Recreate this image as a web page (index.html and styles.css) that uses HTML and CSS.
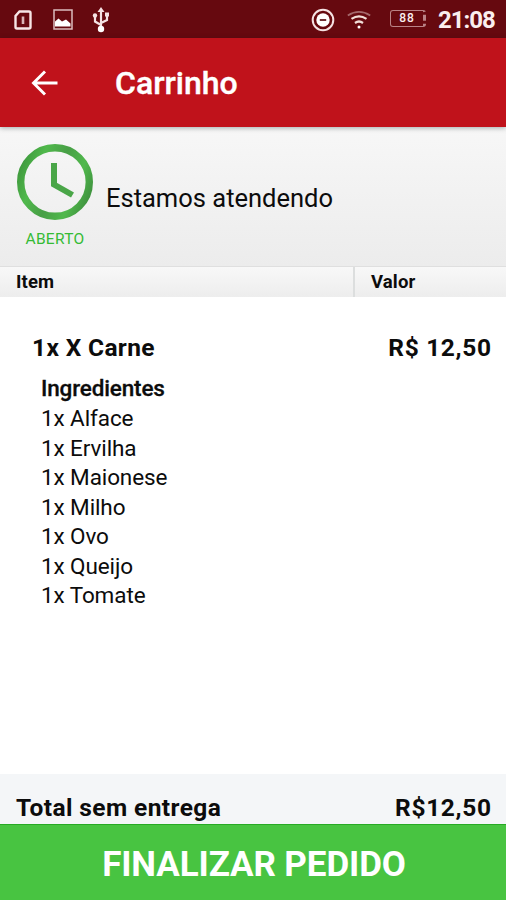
FILE: index.html
```html
<!DOCTYPE html>
<html lang="pt-BR">
<head>
<meta charset="utf-8">
<title>Carrinho</title>
<link rel="stylesheet" href="styles.css">
</head>
<body>
<div class="app">
  <div class="statusbar">
    <svg class="ic-sim" width="18" height="20" viewBox="0 0 18 20"><path d="M5.500 1.500H15a1.500 1.500 0 0 1 1.500 1.500V17a1.500 1.500 0 0 1-1.500 1.500H3A1.500 1.500 0 0 1 1.500 17V6z" fill="none" stroke="#f7e6e6" stroke-width="2.400"/><path d="M9 6.500V14" stroke="#d9b4b6" stroke-width="2.600"/></svg>
    <svg class="ic-image" width="20" height="21" viewBox="0 0 20 21"><rect x="1" y="1" width="18" height="19" fill="none" stroke="#dcbcbe" stroke-width="1.500"/><path d="M2 17.500V12.500L5.500 9.500 9 12.500l4-2 4.500 4v3z" fill="#fff"/></svg>
    <svg class="ic-usb" width="18" height="26" viewBox="0 0 18 26"><path d="M9 4v18M9 18L3 14.500V8.500M9 16l6-3V8" fill="none" stroke="#f5e2e3" stroke-width="2.200"/><path d="M9 0l3.500 5h-7z" fill="#f5e2e3"/><circle cx="9" cy="22" r="3.200" fill="#fff"/><circle cx="3" cy="8.500" r="2.200" fill="#f5e2e3"/><rect x="13" y="5.500" width="4" height="4" fill="#f5e2e3"/></svg>
    <div class="status-right">
      <svg class="ic-dnd" width="24" height="24" viewBox="0 0 24 24"><circle cx="12" cy="12" r="10.300" fill="none" stroke="#f5e2e3" stroke-width="2"/><circle cx="12" cy="12" r="6.700" fill="#fff"/><path d="M8.800 12h6.400" stroke="#713034" stroke-width="2"/></svg>
      <svg class="ic-wifi" width="24" height="20" viewBox="0 0 24 20"><path d="M.8 5.500Q12-1.700 23.200 5.500" fill="none" stroke="#a4686b" stroke-width="1.800"/><path d="M4.500 8.800q7.500-5 15 0M8 13q4-3 8 0" fill="none" stroke="#f2dfd9" stroke-width="2.200"/><circle cx="12" cy="17" r="1.500" fill="#fff"/></svg>
      <div class="battery"><span>88</span></div>
      <div class="clock">21:08</div>
    </div>
  </div>
  <header class="toolbar">
    <svg width="28" height="26" viewBox="0 0 28 26"><path d="M26.500 13H3M14 1.500L2.500 13 14 24.500" fill="none" stroke="#fff" stroke-width="2.900"/></svg>
    <h1>Carrinho</h1>
  </header>
  <section class="store">
    <div class="badge">
      <svg width="78" height="78" viewBox="0 0 78 78">
        <defs><linearGradient id="ring" x1="0" y1="0.300" x2="1" y2="0.700"><stop offset="0" stop-color="#419d3f"/><stop offset=".22" stop-color="#50b94c"/><stop offset=".5" stop-color="#489f46"/><stop offset=".78" stop-color="#50b94c"/><stop offset="1" stop-color="#419640"/></linearGradient></defs>
        <circle cx="39" cy="39" r="34.300" fill="none" stroke="url(#ring)" stroke-width="7.400"/>
        <path d="M38 20v21.500L56.500 52" fill="none" stroke="#4aa648" stroke-width="6"/>
      </svg>
      <span class="open">ABERTO</span>
    </div>
    <p class="message">Estamos atendendo</p>
  </section>
  <div class="columns"><div class="col-item">Item</div><div class="col-value">Valor</div></div>
  <main class="cart">
    <div class="line"><span class="product">1x X Carne</span><span class="price">R$ 12,50</span></div>
    <h2>Ingredientes</h2>
    <ul>
      <li>1x Alface</li>
      <li>1x Ervilha</li>
      <li>1x Maionese</li>
      <li>1x Milho</li>
      <li>1x Ovo</li>
      <li>1x Queijo</li>
      <li>1x Tomate</li>
    </ul>
  </main>
  <div class="total"><span class="total-label">Total sem entrega</span><span class="price">R$12,50</span></div>
  <button class="checkout">FINALIZAR PEDIDO</button>
</div>
</body>
</html>
```
FILE: styles.css
```css
* { box-sizing: border-box; }
body { margin: 0; font-family: Roboto, "Liberation Sans", sans-serif; color: #0c0c0c; background: #fff; }
.app { width: 506px; height: 900px; display: flex; flex-direction: column; overflow: hidden; }
h1, h2, p, ul { margin: 0; padding: 0; }
svg { display: block; flex: none; }
.statusbar { height: 38px; flex: none; display: flex; align-items: center; background: #66090f; padding: 2px 12px 0 14px; color: #fbeeee; }
.ic-image { margin-left: 21px; margin-bottom: 2px; }
.ic-usb { margin-left: 19px; margin-bottom: 1px; }
.status-right { margin-left: auto; display: flex; align-items: center; }
.ic-wifi { margin-left: 12px; margin-bottom: 1px; }
.battery { width: 36px; height: 17px; margin: 0 0 4px 19px; border: 1px solid #b98286; border-right: 3px dashed #b98286; border-radius: 3px; display: flex; align-items: center; justify-content: center; font-size: 12px; font-weight: 500; letter-spacing: 1px; }
.clock { width: 56px; margin-left: 12px; font-size: 24px; line-height: 36px; font-weight: 700; letter-spacing: -1px; white-space: nowrap; }
.toolbar { height: 89px; flex: none; display: flex; align-items: center; background: #c0121b; color: #fff; padding-left: 31px; position: relative; box-shadow: 0 1px 5px rgba(0,30,30,.35); }
.toolbar h1 { margin-left: 56px; font-size: 32px; line-height: 40px; font-weight: 500; -webkit-text-stroke: .4px #fff; }
.store { height: 139px; flex: none; display: flex; background: linear-gradient(#f7f7f7, #ececec); padding-left: 15px; }
.badge { width: 81px; padding: 16px 1px 0 0; display: flex; flex-direction: column; align-items: center; }
.open { margin-top: 8px; font-size: 15.500px; line-height: 20px; letter-spacing: .3px; color: #35bb35; }
.message { margin-left: 10px; padding-top: 54px; font-size: 25.500px; line-height: 34px; white-space: nowrap; }
.columns { height: 31px; flex: none; display: flex; border-top: 1px solid #dfdfdf; background: linear-gradient(#f8f8f8, #ededed); font-size: 18.500px; line-height: 30px; font-weight: 700; letter-spacing: .15px; }
.col-item { width: 353px; padding-left: 16px; }
.col-value { flex: 1; border-left: 2px solid #dcdede; padding-left: 16px; }
.cart { flex: 1; padding: 33px 15px 0 32px; }
.line { display: flex; justify-content: space-between; font-size: 24.500px; line-height: 36px; font-weight: 700; letter-spacing: .35px; }
.price { letter-spacing: .65px; margin-right: -.65px; }
.cart h2 { margin: 7px 0 0 9px; font-size: 22.500px; line-height: 30px; font-weight: 500; letter-spacing: -.15px; -webkit-text-stroke: .3px #0c0c0c; }
.cart ul { margin: 1px 0 0 9px; list-style: none; font-size: 22.500px; line-height: 29.500px; letter-spacing: -.1px; }
.total { height: 50px; flex: none; display: flex; justify-content: space-between; background: #f4f6f8; padding: 18px 15px 0 16px; font-size: 24.500px; line-height: 32px; font-weight: 700; letter-spacing: .4px; }
.checkout { height: 76px; flex: none; border: 0; border-top: 1px solid #27aa24; background: #48c441; color: #fff; font-family: inherit; font-size: 35px; line-height: 44px; font-weight: 700; letter-spacing: -.1px; padding: 4px 0 0 2px; white-space: nowrap; }
```
